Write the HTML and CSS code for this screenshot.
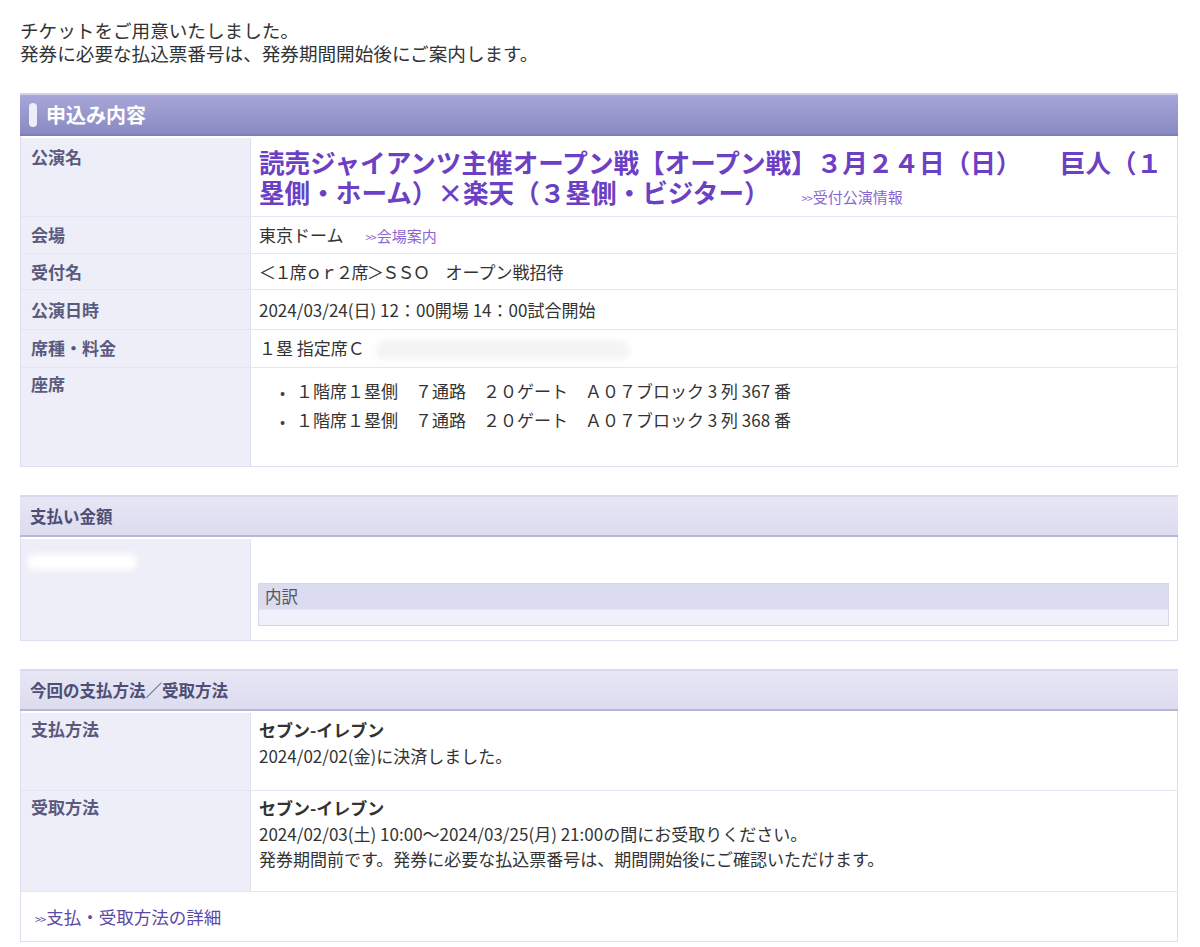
FILE: index.html
```html
<!DOCTYPE html>
<html lang="ja">
<head>
<meta charset="utf-8">
<title>申込み内容</title>
<link rel="stylesheet" href="styles.css">
</head>
<body>
<div class="page">
  <p class="intro">チケットをご用意いたしました。<br>発券に必要な払込票番号は、発券期間開始後にご案内します。</p>

  <section class="panel">
    <h2 class="head head-main"><span class="pill"></span>申込み内容</h2>
    <div class="rows">
      <div class="row row-title">
        <div class="label">公演名</div>
        <div class="value"><span class="title">読売ジャイアンツ主催オープン戦【オープン戦】３月２４日（日）　　巨人（１<br>塁側・ホーム）×楽天（３塁側・ビジター）</span><a class="sublink sublink-title" href="#"><span class="gt">&gt;&gt;</span>受付公演情報</a></div>
      </div>
      <div class="row">
        <div class="label">会場</div>
        <div class="value">東京ドーム<a class="sublink" href="#"><span class="gt">&gt;&gt;</span>会場案内</a></div>
      </div>
      <div class="row">
        <div class="label">受付名</div>
        <div class="value"><span class="tight">＜１席ｏｒ２席＞ＳＳＯ</span>　オープン戦招待</div>
      </div>
      <div class="row row-tall">
        <div class="label">公演日時</div>
        <div class="value">2024/03/24(日) 12：00開場 14：00試合開始</div>
      </div>
      <div class="row row-fee">
        <div class="label">席種・料金</div>
        <div class="value">１塁 指定席Ｃ <span class="redact redact-seat"></span></div>
      </div>
      <div class="row row-seats">
        <div class="label">座席</div>
        <div class="value">
          <ul class="seats">
            <li>１階席１塁側　７通路　２０ゲート　Ａ０７ブロック 3 列 367 番</li>
            <li>１階席１塁側　７通路　２０ゲート　Ａ０７ブロック 3 列 368 番</li>
          </ul>
        </div>
      </div>
    </div>
  </section>

  <section class="panel">
    <h2 class="head head-sub">支払い金額</h2>
    <div class="rows">
      <div class="row row-amount">
        <div class="label"><span class="redact redact-label"></span></div>
        <div class="value">
          <div class="amount-blank"></div>
          <div class="breakdown">
            <div class="breakdown-head">内訳</div>
            <div class="breakdown-body"></div>
          </div>
        </div>
      </div>
    </div>
  </section>

  <section class="panel">
    <h2 class="head head-sub">今回の支払方法／受取方法</h2>
    <div class="rows">
      <div class="row row-method">
        <div class="label">支払方法</div>
        <div class="value method">
          <strong>セブン-イレブン</strong><br>
          2024/02/02(金)に決済しました。
        </div>
      </div>
      <div class="row row-method">
        <div class="label">受取方法</div>
        <div class="value method method-last">
          <strong>セブン-イレブン</strong><br>
          2024/02/03(土) 10:00〜2024/03/25(月) 21:00の間にお受取りください。<br>
          発券期間前です。発券に必要な払込票番号は、期間開始後にご確認いただけます。
        </div>
      </div>
      <div class="row-link">
        <a class="detail-link" href="#"><span class="gt">&gt;&gt;</span>支払・受取方法の詳細</a>
      </div>
    </div>
  </section>
</div>
</body>
</html>
```
FILE: styles.css
```css
html, body {
  margin: 0;
  padding: 0;
  background: #ffffff;
}

body {
  font-family: "Noto Sans CJK JP", "Noto Sans", sans-serif;
  color: #333333;
}

.page {
  width: 1158px;
  padding: 18px 0 0 20px;
}

.intro {
  margin: 0;
  font-size: 18.6px;
  line-height: 23px;
  color: #333333;
}

.panel {
  margin-top: 29px;
  border-left: 1px solid #dedeee;
  border-right: 1px solid #dedeee;
  border-bottom: 1px solid #dedeee;
}

.panel + .panel {
  margin-top: 28px;
}

.head {
  margin: 0;
  display: flex;
  align-items: center;
  font-weight: bold;
}

.head-main {
  height: 39px;
  border-top: 2px solid #cfd0ea;
  border-bottom: 2px solid #7e7eb6;
  background: linear-gradient(#a6a6d8, #8a8ac3);
  color: #ffffff;
  font-size: 20px;
  padding-left: 9px;
  margin: 0 -1px;
}

.pill {
  width: 8px;
  height: 24px;
  border-radius: 4px;
  background: #ececfa;
  margin-right: 9px;
}

.head-sub {
  height: 38px;
  border-top: 2px solid #d8d8ee;
  border-bottom: 2px solid #b6b6d6;
  background: linear-gradient(#e6e6f5, #dcdcef);
  color: #4e4e74;
  font-size: 16.5px;
  padding-left: 10px;
  margin: 0 -1px;
}

.rows {
  margin-top: 2px;
}

.row {
  display: grid;
  grid-template-columns: 230px 1fr;
  border-top: 1px solid #e4e4f2;
}

.row:first-child {
  border-top: none;
}

.label {
  background: #eeeef8;
  border-right: 1px solid #e0e0f0;
  padding: 7px 10px 6px;
  font-size: 17px;
  line-height: 22px;
  font-weight: bold;
  color: #5a5a7e;
}

.value {
  padding: 7px 8px 6px;
  font-size: 17px;
  line-height: 22px;
  color: #333333;
}

.tight {
  letter-spacing: -1.6px;
}

.row-title .label {
  padding-top: 8px;
}

.row-title .value {
  padding: 9px 8px 8px;
  font-size: 25.6px;
  line-height: 30px;
}

.title {
  font-size: 25.6px;
  font-weight: bold;
  color: #6c40c4;
}

.sublink {
  color: #8a66d2;
  text-decoration: none;
  font-size: 15px;
  line-height: 20px;
  margin-left: 22px;
}

.sublink-title {
  margin-left: 32px;
}

.gt {
  font-size: 11px;
  letter-spacing: -1px;
  margin-right: 1px;
}

.row-tall .label,
.row-tall .value {
  padding-top: 9px;
  padding-bottom: 8px;
}

.row-fee .label,
.row-fee .value {
  padding-bottom: 7px;
}

.redact {
  display: inline-block;
  border-radius: 12px;
  filter: blur(3px);
  vertical-align: middle;
}

.redact-seat {
  width: 255px;
  height: 20px;
  background: #f4f4f6;
  margin-left: 6px;
}

.row-seats .label {
  padding-top: 5px;
}

.row-seats .value {
  padding: 9px 8px 31px;
}

.seats {
  margin: 0;
  padding: 0;
  list-style: none;
  line-height: 28px;
}

.seats li::before {
  content: "•";
  display: inline-block;
  width: 37px;
  padding-left: 21px;
  box-sizing: border-box;
  font-size: 15px;
  color: #444444;
}

.row-amount .label {
  padding-top: 9px;
}

.redact-label {
  width: 110px;
  height: 16px;
  background: #ffffff;
  margin-left: -4px;
}

.row-amount .value {
  padding: 0 8px 14px 7px;
}

.amount-blank {
  height: 44px;
}

.breakdown {
  border: 1px solid #d6d6ea;
}

.breakdown-head {
  background: #dcdcf0;
  font-size: 16.5px;
  line-height: 25px;
  padding-left: 6px;
  color: #555566;
}

.breakdown-body {
  background: #f0f0fa;
  height: 15px;
  border-top: 1px solid #e6e6f4;
}

.row-method .label {
  padding: 5px 10px;
}

.method {
  padding: 4px 8px 22px;
  line-height: 25.5px;
}

.method-last {
  padding-bottom: 19px;
}

.method strong {
  font-weight: bold;
  color: #333333;
}

.row-link {
  border-top: 1px solid #e4e4f2;
  height: 49px;
  display: flex;
  align-items: center;
  padding-left: 14px;
}

.detail-link {
  color: #5a49a6;
  text-decoration: none;
  font-size: 17.5px;
}
```
